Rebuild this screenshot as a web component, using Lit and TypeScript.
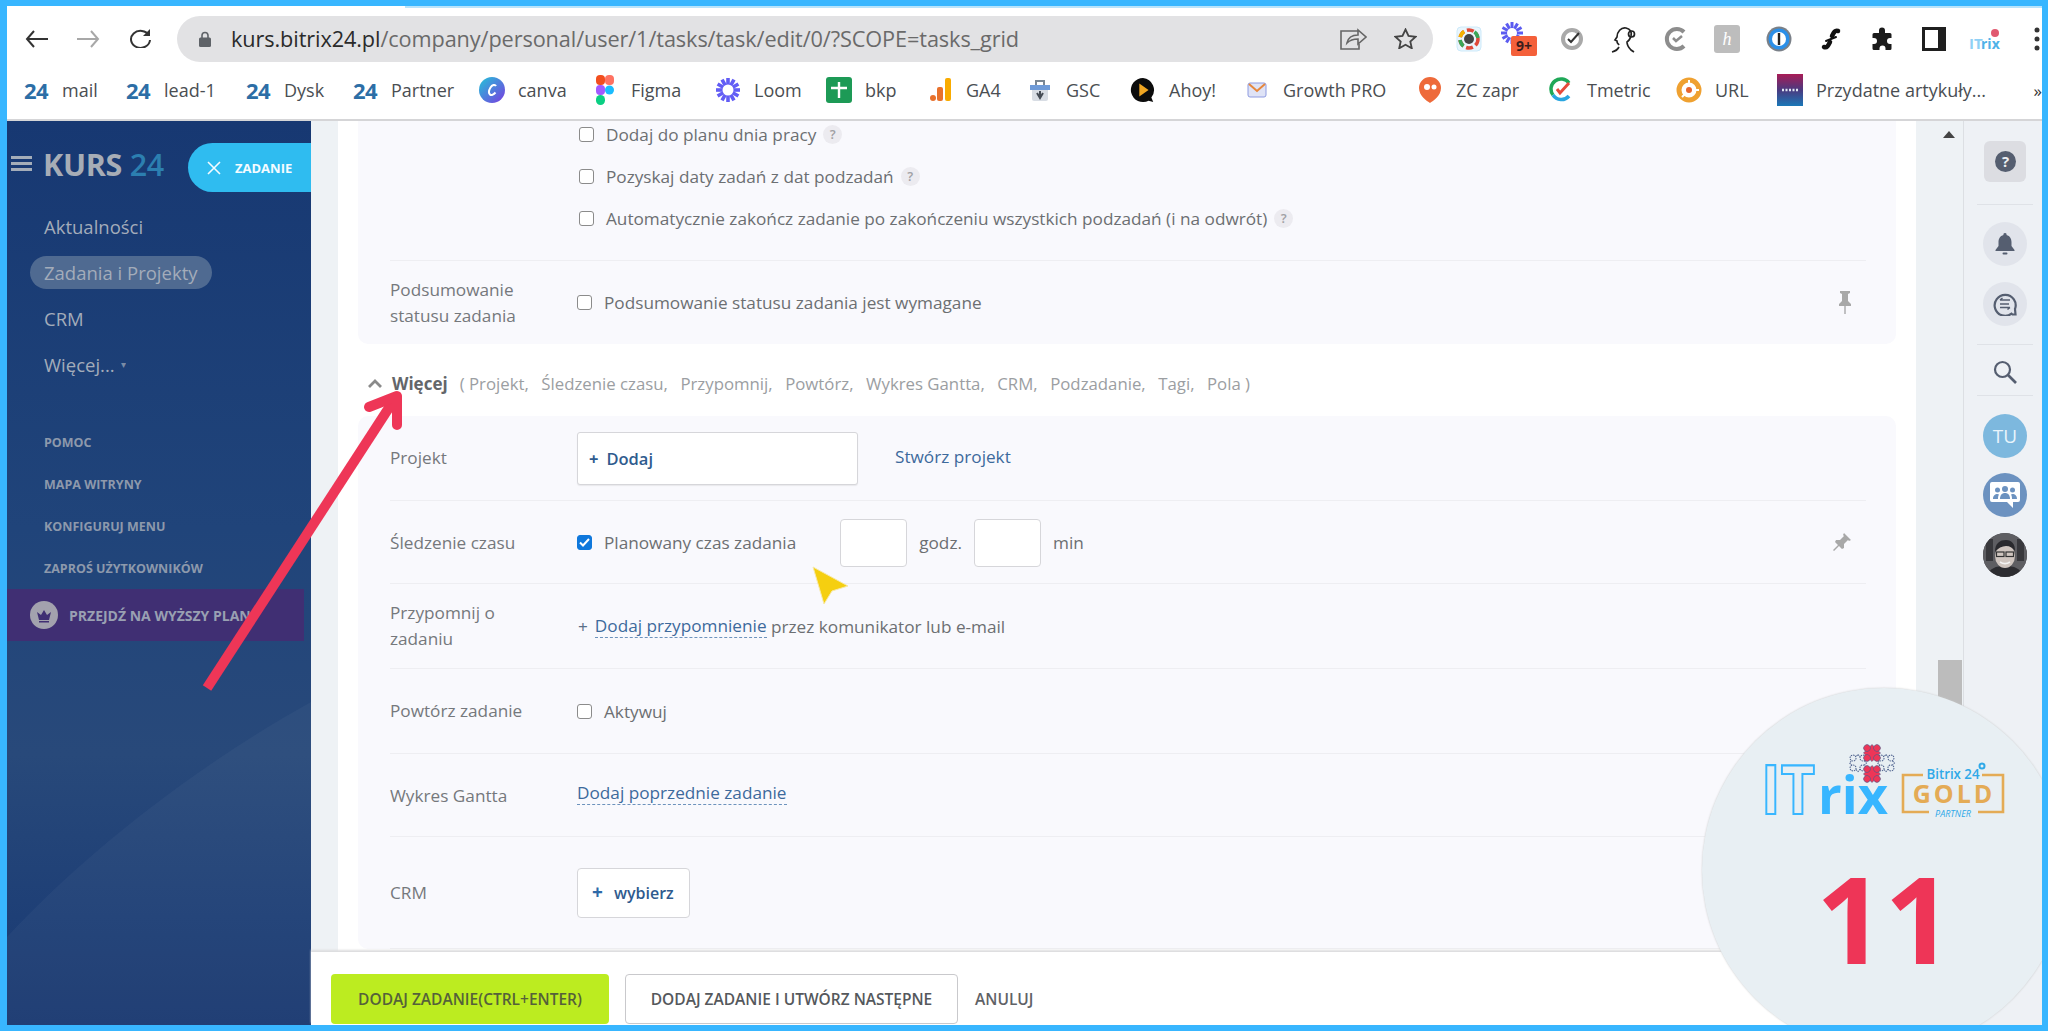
import { LitElement, html, css, svg } from 'lit';
import { customElement } from 'lit/decorators.js';

const bookmarks = [
  { icon: '24', label: 'mail', w: 102 },
  { icon: '24', label: 'lead-1', w: 120 },
  { icon: '24', label: 'Dysk', w: 107 },
  { icon: '24', label: 'Partner', w: 127 },
  { icon: 'canva', label: 'canva', w: 113 },
  { icon: 'figma', label: 'Figma', w: 123 },
  { icon: 'loom', label: 'Loom', w: 111 },
  { icon: 'bkp', label: 'bkp', w: 101 },
  { icon: 'ga4', label: 'GA4', w: 100 },
  { icon: 'gsc', label: 'GSC', w: 103 },
  { icon: 'ahoy', label: 'Ahoy!', w: 114 },
  { icon: 'growth', label: 'Growth PRO', w: 173 },
  { icon: 'zc', label: 'ZC zapr', w: 131 },
  { icon: 'tmetric', label: 'Tmetric', w: 128 },
  { icon: 'url', label: 'URL', w: 101 },
  { icon: 'przyd', label: 'Przydatne artykuły...', w: 240 },
];

const moreItems = ['Projekt,', 'Śledzenie czasu,', 'Przypomnij,', 'Powtórz,', 'Wykres Gantta,', 'CRM,', 'Podzadanie,', 'Tagi,', 'Pola )'];

function bookmarkIcon(name: string) {
  switch (name) {
    case '24':
      return html`<span class="b24">24</span>`;
    case 'canva':
      return html`<svg width="26" height="26" viewBox="0 0 26 26"><defs><linearGradient id="cv" x1="0" y1="0" x2="1" y2="1"><stop offset="0" stop-color="#22c4d8"/><stop offset="1" stop-color="#7a3be0"/></linearGradient></defs><circle cx="13" cy="13" r="13" fill="url(#cv)"/><path d="M17 9c-1-2-4-1-5.500 1.500S9.500 16 11 17.500s4-.5 5.500-2" fill="none" stroke="#fff" stroke-width="2"/></svg>`;
    case 'figma':
      return html`<svg width="18" height="30" viewBox="0 0 18 30"><rect x="0" y="0" width="9" height="10" rx="4" fill="#f24e1e"/><rect x="9" y="0" width="9" height="10" fill="#ff7262" rx="4"/><rect x="0" y="10" width="9" height="10" rx="4" fill="#a259ff"/><circle cx="13.500" cy="15" r="4.500" fill="#1abcfe"/><rect x="0" y="20" width="9" height="10" rx="4.500" fill="#0acf83"/></svg>`;
    case 'loom':
      return html`<svg width="26" height="26" viewBox="0 0 26 26"><g stroke="#625df5" stroke-width="3.600">${[0, 30, 60, 90, 120, 150].map(a => svg`<line x1="13" y1="1" x2="13" y2="25" transform="rotate(${a} 13 13)"/>`)}</g><circle cx="13" cy="13" r="5.500" fill="#fff"/></svg>`;
    case 'bkp':
      return html`<svg width="26" height="26" viewBox="0 0 26 26"><rect width="26" height="26" rx="3" fill="#1d9a56"/><path d="M13 5v16M5 11h16" stroke="#fff" stroke-width="2.400"/></svg>`;
    case 'ga4':
      return html`<svg width="24" height="26" viewBox="0 0 24 26"><circle cx="5" cy="21" r="3" fill="#e8712c"/><rect x="9" y="10" width="6" height="14" rx="2" fill="#e8712c"/><rect x="17" y="1" width="6" height="23" rx="2" fill="#f9ab00"/></svg>`;
    case 'gsc':
      return html`<svg width="24" height="26" viewBox="0 0 24 26"><rect x="4" y="8" width="16" height="16" rx="2" fill="#d8dde4"/><rect x="2" y="8" width="20" height="5" fill="#6f9bd8"/><path d="M8 8V4h8v4" fill="none" stroke="#7a8794" stroke-width="2"/><path d="M12 14v7M9 16l3 5 3-5" fill="none" stroke="#454c55" stroke-width="2"/></svg>`;
    case 'ahoy':
      return html`<svg width="28" height="28" viewBox="0 0 28 28"><path d="M14 1a13 13 0 1 0 6 24.500L25 27l-2-5A13 13 0 0 0 14 1z" fill="#0c0c0c"/><path d="M10 7l10 7-10 7z" fill="#f0a622"/></svg>`;
    case 'growth':
      return html`<svg width="24" height="22" viewBox="0 0 24 22"><rect x="3" y="4" width="18" height="14" rx="2" fill="#dfe3f6" stroke="#8e9be0"/><path d="M4 5l8 7 8-7" fill="none" stroke="#e6873e" stroke-width="2"/></svg>`;
    case 'zc':
      return html`<svg width="24" height="28" viewBox="0 0 24 28"><path d="M12 1a11 11 0 0 1 11 11c0 8-8 13-11 15-3-2-11-7-11-15A11 11 0 0 1 12 1z" fill="#ee6a3a"/><circle cx="9" cy="11" r="3" fill="#fff"/><circle cx="16" cy="11" r="2.500" fill="#fff"/></svg>`;
    case 'tmetric':
      return html`<svg width="24" height="26" viewBox="0 0 24 26"><path d="M20 6A10 10 0 0 0 4 18" fill="none" stroke="#1fa858" stroke-width="3.500"/><path d="M4 18a10 10 0 0 0 16 1" fill="none" stroke="#2aa6e0" stroke-width="3.500"/><path d="M8 12l3 4 9-10" fill="none" stroke="#e64a3a" stroke-width="3"/></svg>`;
    case 'url':
      return html`<svg width="26" height="26" viewBox="0 0 26 26"><circle cx="13" cy="13" r="10" fill="none" stroke="#efa131" stroke-width="5"/><circle cx="13" cy="13" r="3" fill="#e8662e"/><path d="M13 3v5M23 13h-5M6 20l3-3" stroke="#fff" stroke-width="2"/></svg>`;
    case 'przyd':
      return html`<svg width="26" height="32" viewBox="0 0 26 32"><defs><linearGradient id="pz" x1="0" y1="0" x2="0" y2="1"><stop offset="0" stop-color="#a81c56"/><stop offset=".5" stop-color="#4a3a80"/><stop offset="1" stop-color="#1a78b8"/></linearGradient></defs><rect width="26" height="32" fill="url(#pz)"/><path d="M5 16h16" stroke="#dfe6f2" stroke-width="2.500" stroke-dasharray="2 1.500"/></svg>`;
  }
  return '';
}

@customElement('app-root')
export class AppRoot extends LitElement {
  static styles = css`
    :host {
      display: block;
      font-family: "Open Sans", "Liberation Sans", sans-serif;
    }
    * { box-sizing: border-box; }
    .frame {
      position: relative;
      width: 2048px;
      height: 1031px;
      border: solid #38b6ff;
      border-width: 6px 6px 6px 7px;
      overflow: hidden;
      display: flex;
      flex-direction: column;
      background: #fff;
    }

    /* browser chrome */
    .chrome { height: 115px; flex: none; border-bottom: 2px solid #d5d5d7; background: #fff; }
    .toolbar { height: 57px; display: flex; align-items: center; padding-top: 8px; position: relative; }
    .tabline { position: absolute; left: 398px; right: 0; top: 0; height: 2px; background: #b8e3fb; }
    .nav { width: 52px; display: flex; justify-content: center; flex: none; }
    .nav.first { margin-left: 3px; }
    .pill {
      margin-left: 11px;
      width: 1256px;
      height: 46px;
      border-radius: 23px;
      background: #e2e2e4;
      display: flex;
      align-items: center;
      padding-left: 22px;
      flex: none;
    }
    .url { margin-left: 20px; font-size: 21.700px; color: #6a6a6a; white-space: nowrap; letter-spacing: -.1px; }
    .url b { font-weight: 400; color: #2a2a2a; }
    .pill-end { margin-left: auto; display: flex; align-items: center; gap: 27px; padding-right: 16px; }
    .exts { display: flex; margin-left: 10px; }
    .ext { width: 51.700px; display: flex; justify-content: center; align-items: center; position: relative; height: 34px; flex: none; }
    .bookmarks { height: 56px; display: flex; align-items: center; padding-left: 16px; padding-bottom: 2px; }
    .bm { display: flex; align-items: center; flex: none; }
    .bm-icon { width: 26px; margin-right: 13px; display: flex; justify-content: center; align-items: center; flex: none; }
    .bm-label { font-size: 18px; color: #4a4e52; white-space: nowrap; }
    .b24 { font-size: 22px; font-weight: 700; color: #2c6ea6; letter-spacing: -.5px; }
    .more-bm { margin-left: auto; margin-right: 0; font-size: 17px; color: #333; }

    /* bitrix layout */
    .app { flex: 1; display: flex; min-height: 0; }
    .sidebar {
      width: 304px;
      flex: none;
      position: relative;
      overflow: hidden;
      background: linear-gradient(180deg, #173872 0%, #20447a 45%, #28497a 70%, #1e3f76 88%, #193970 100%);
    }
    .side-arc { position: absolute; left: 0; top: 0; }
    .side-head { position: relative; display: flex; margin-top: 22px; height: 49px; align-items: flex-start; padding-left: 4px; }
    .burger { width: 21px; height: 15px; margin-top: 13px; border-top: 3px solid #a4adb9; border-bottom: 3px solid #a4adb9; position: relative; flex: none; }
    .burger::after { content: ""; position: absolute; left: 0; right: 0; top: 3px; height: 3px; background: #a4adb9; }
    .kurs { margin-left: 11px; font-size: 30.500px; line-height: 42px; font-weight: 700; color: #a7adb6; white-space: nowrap; letter-spacing: -.3px; }
    .kurs span { color: #2c7fb0; font-weight: 600; }
    .add {
      margin-left: auto;
      width: 123px;
      height: 49px;
      border-radius: 25px 0 0 25px;
      background: #2fbcf0;
      display: flex;
      align-items: center;
      padding-left: 19px;
      gap: 14px;
      color: #f4fbff;
      font-size: 13px;
      font-weight: 700;
    }
    .menu { position: relative; margin-top: 11px; padding-left: 23px; }
    .menu-item { height: 46px; display: flex; align-items: center; padding-left: 14px; font-size: 18.500px; color: #a3acba; }
    .menu-item .on { margin-left: -14px; padding: 0 14px; height: 33px; width: 182px; border-radius: 17px; background: #4f6a91; display: flex; align-items: center; white-space: nowrap; }
    .caret { margin-left: 6px; font-size: 10px; opacity: .7; }
    .small { position: relative; margin-top: 34px; padding-left: 37px; }
    .small div { height: 42px; display: flex; align-items: center; font-size: 12.500px; font-weight: 700; color: #8d99ac; text-transform: uppercase; white-space: nowrap; }
    .upgrade { position: relative; height: 52px; width: 297px; background: #402f73; display: flex; align-items: center; padding-left: 23px; gap: 11px; font-size: 14px; font-weight: 700; color: #99a0b2; white-space: nowrap; }
    .crown { width: 28px; height: 28px; flex: none; }

    .main { flex: 1; display: flex; min-width: 0; }
    .center { flex: 1; display: flex; flex-direction: column; min-width: 0; }
    .scroller { flex: 1; display: flex; min-height: 0; overflow: hidden; background: #eef2f5; padding-left: 27px; }
    .sheet { width: 1578px; flex: none; background: #fff; padding: 0 20px; overflow: hidden; }
    .gutter { flex: 1; padding: 10px 0 0 22px; }
    .up { width: 0; height: 0; margin-left: 5px; border: 6px solid transparent; border-top: 0; border-bottom: 7px solid #444; }
    .thumb { width: 24px; height: 60px; margin-top: 522px; background: #bcbcbc; }
    .panel { background: #f9f9fd; border-radius: 10px; padding: 0 30px 0 32px; }
    .panel.top { border-radius: 0 0 10px 10px; }
    .opts { margin-top: -8px; padding: 0 0 21px 187px; border-bottom: 1px solid #eeeef2; }
    .opt { height: 42px; display: flex; align-items: center; padding-left: 2px; font-size: 17.200px; color: #6c6f72; white-space: nowrap; }
    .box { width: 15px; height: 15px; border: 1.500px solid #8b8b8b; border-radius: 3px; background: #fff; flex: none; margin-right: 12px; }
    .box.check { background: #0f78dc; border-color: #0f78dc; display: flex; align-items: center; justify-content: center; }
    .hint { width: 19px; height: 19px; border-radius: 50%; background: #ecebf0; color: #a0a0a4; font-size: 13px; font-weight: 600; display: flex; align-items: center; justify-content: center; margin-left: 7px; }
    .row { display: flex; align-items: center; border-bottom: 1px solid #eeeef2; font-size: 17.200px; color: #6c6f72; }
    .row.last { border-bottom: 0; }
    .h83 { height: 83px; }
    .h85 { height: 85px; }
    .h112 { height: 112px; }
    .label { width: 187px; flex: none; line-height: 26px; color: #75787c; }
    .label.low { padding-top: 2px; }
    .val { flex: 1; display: flex; align-items: center; white-space: nowrap; }
    .pin { margin-left: auto; margin-right: 14px; display: flex; }
    .link { color: #3d6a9c; }
    .dash { color: #3d6a9c; border-bottom: 1px dashed #6d93bd; line-height: 22px; }
    .dash.raised { margin-top: -4px; }
    .picker { width: 281px; height: 53px; background: #fff; border: 1px solid #d6d6da; border-radius: 3px; display: flex; align-items: center; padding-left: 11px; color: #2f5b8e; font-size: 16.500px; font-weight: 600; box-shadow: 0 1px 1px #e8e8ec; }
    .picker i { font-style: normal; margin-right: 8px; font-weight: 700; }
    .side-link { margin-left: 37px; margin-top: -3px; }
    .num { width: 67px; height: 48px; background: #fff; border: 1px solid #d6d6da; border-radius: 4px; margin-top: 2px; }
    .num.one { margin-left: 44px; margin-right: 12px; }
    .num.two { margin-left: 12px; margin-right: 12px; }
    .plus { color: #5a6f88; margin: 0 7px 0 1px; }
    .choose { width: 113px; height: 50px; background: #fff; border: 1px solid #d6d6da; border-radius: 4px; display: flex; align-items: center; padding-left: 14px; color: #2f5b8e; font-size: 16px; font-weight: 600; }
    .choose i { font-style: normal; font-weight: 700; font-size: 19px; line-height: 1; margin-right: 11px; color: #2f6aa8; }
    .morebar { height: 72px; display: flex; align-items: center; padding: 6px 0 0 10px; white-space: nowrap; }
    .chev { width: 14px; flex: none; display: flex; margin-right: 10px; }
    .morebar b { font-size: 17px; font-weight: 700; color: #63666a; }
    .morelist { display: flex; margin-left: 12px; gap: 12.500px; font-size: 16.800px; color: #9b9ea2; }

    .footer { height: 73px; flex: none; background: #fff; display: flex; align-items: flex-start; padding: 22px 0 0 20px; position: relative; box-shadow: 0 -2px 2px #dcdcde; }
    .btn { height: 50px; border-radius: 4px; display: flex; align-items: center; justify-content: center; font-size: 15.500px; font-weight: 600; text-transform: uppercase; white-space: nowrap; }
    .btn.go { width: 278px; background: #bcec20; color: #55613a; }
    .btn.next { width: 333px; margin-left: 16px; background: #fff; border: 1px solid #c9c9cc; color: #55585c; }
    .cancel { margin-left: 17px; height: 50px; display: flex; align-items: center; font-size: 15.500px; font-weight: 600; color: #5f6266; }
    .foot-box { margin: 17px 0 0 auto; }

    .rail { width: 79px; flex: none; background: #eef1f5; border-left: 1px solid #dcdfe3; padding: 20px 0 0 4px; display: flex; flex-direction: column; align-items: center; }
    .help { width: 42px; height: 41px; border-radius: 6px; background: #dcdde2; display: flex; align-items: center; justify-content: center; margin-bottom: 22px; flex: none; }
    .sep { width: 56px; height: 1px; background: #dfe2e7; flex: none; }
    .round { width: 44px; height: 44px; border-radius: 50%; background: #e1e4eb; display: flex; align-items: center; justify-content: center; flex: none; overflow: hidden; }
    .bell { margin-top: 17px; }
    .chat { margin-top: 16px; margin-bottom: 18px; }
    .find { display: flex; margin: 15px 0 11px; height: 24px; flex: none; }
    .tu { margin-top: 18px; background: #7db8de; color: #e8f4fb; font-size: 19px; }
    .grp { margin-top: 15px; background: #6c92c0; }
    .me { margin-top: 16px; background: #3c3c40; }

    /* things laid over the recording */
    .marks { position: absolute; left: -7px; top: -6px; pointer-events: none; }
    .badge { position: absolute; left: 1695px; top: 682px; width: 364px; height: 364px; border-radius: 50%; background: #e8eff3; box-shadow: 0 0 2px #c9c9c9; }
    .logo { position: absolute; left: 60px; top: 30px; }
    .count { position: absolute; left: 114px; top: 170px; font-size: 120px; line-height: 120px; font-weight: 700; color: #ee3557; }
  `;

  private renderExts() {
    return html`<div class="exts">
      <div class="ext"><svg width="26" height="26" viewBox="0 0 26 26"><rect x="1" y="1" width="24" height="24" rx="4" fill="#eaf6fd" stroke="#cdeafa"/><circle cx="13" cy="13" r="9" fill="none" stroke="#e04a3a" stroke-width="3.500" stroke-dasharray="7 3"/><circle cx="13" cy="13" r="9" fill="none" stroke="#3aa757" stroke-width="3.500" stroke-dasharray="7 21" stroke-dashoffset="-20"/><circle cx="13" cy="13" r="9" fill="none" stroke="#f4b400" stroke-width="3.500" stroke-dasharray="7 30" stroke-dashoffset="-30"/><circle cx="13" cy="13" r="5" fill="#444"/></svg></div>
      <div class="ext"><svg width="44" height="40" viewBox="0 0 44 40"><g stroke="#5c5cf0" stroke-width="3">${[0, 30, 60, 90, 120, 150].map(a => svg`<line x1="13" y1="3" x2="13" y2="25" transform="rotate(${a} 13 14)"/>`)}</g><circle cx="13" cy="14" r="5" fill="#fff"/><rect x="12" y="17" width="26" height="20" rx="2" fill="#f4603a"/><text x="25" y="32" text-anchor="middle" font-size="14" font-weight="700" fill="#3a1d1d" font-family="Open Sans">9+</text></svg></div>
      <div class="ext"><svg width="24" height="24" viewBox="0 0 24 24"><circle cx="12" cy="12" r="9" fill="none" stroke="#a9a9a9" stroke-width="4"/><path d="M8 12l3 3 8-9" fill="none" stroke="#333" stroke-width="2"/></svg></div>
      <div class="ext"><svg width="26" height="28" viewBox="0 0 26 28" fill="none" stroke="#222" stroke-width="1.700"><path d="M1 27c4-1 6-3 7-5"/><path d="M8 20c-1-2-2-1-2-4l-2-1 2-3c0-5 4-10 9-9 4 1 6 4 5 8-1 3-2 5-4 6 0 3 2 6 4 8l3 2"/><circle cx="20.500" cy="9" r="3"/></svg></div>
      <div class="ext"><svg width="26" height="26" viewBox="0 0 26 26" fill="none" stroke="#8d8d8d" stroke-width="4"><path d="M21 6A10 10 0 1 0 21 20"/><path d="M10 12l3 3 6-5" stroke-width="2.500"/></svg></div>
      <div class="ext"><svg width="26" height="28" viewBox="0 0 26 28"><rect width="26" height="28" rx="3" fill="#bdbdbd"/><text x="13" y="20" text-anchor="middle" font-size="18" font-style="italic" font-family="Liberation Serif" fill="#fff">h</text></svg></div>
      <div class="ext"><svg width="26" height="26" viewBox="0 0 26 26"><circle cx="13" cy="13" r="12.500" fill="#7a8088"/><circle cx="13" cy="13" r="10.500" fill="#2b8fe8"/><circle cx="13" cy="13" r="7" fill="#fff"/><rect x="11.800" y="7" width="2.400" height="12" fill="#222"/></svg></div>
      <div class="ext"><svg width="22" height="24" viewBox="0 0 22 24" fill="none" stroke="#111" stroke-width="4.500" stroke-linecap="round"><path d="M4 20c3 1 4-1 6-5"/><path d="M18 4c-3-1-4 1-6 5"/><path d="M6 14l10-4" stroke="#111" stroke-width="2"/></svg></div>
      <div class="ext"><svg width="24" height="24" viewBox="0 0 24 24"><path fill="#1b1b1b" d="M9 3.500a3 3 0 0 1 6 0V6h5a1.500 1.500 0 0 1 1.500 1.500V11h-1.500a3 3 0 0 0 0 6h1.500v4.500A1.500 1.500 0 0 1 20 23h-4.500v-1.500a3 3 0 0 0-6 0V23H4a1.500 1.500 0 0 1-1.500-1.500V17H4a3 3 0 0 0 0-6H2.500V7.500A1.500 1.500 0 0 1 4 6h5z"/></svg></div>
      <div class="ext"><svg width="24" height="24" viewBox="0 0 24 24"><rect x="1.500" y="1.500" width="21" height="21" fill="#fff" stroke="#1f1f1f" stroke-width="3"/><rect x="16" y="2" width="6" height="20" fill="#1f1f1f"/></svg></div>
      <div class="ext"><svg width="34" height="26" viewBox="0 0 34 26"><text x="0" y="23" font-size="15" font-weight="700" fill="#8fd0f5" font-family="Open Sans">IT</text><text x="12" y="23" font-size="14" font-weight="700" fill="#4fb2e8" font-family="Open Sans">rix</text><circle cx="26" cy="7" r="4" fill="#e05a70"/></svg></div>
      <div class="ext"><svg width="8" height="26" viewBox="0 0 8 26" fill="#333"><circle cx="4" cy="4" r="2.500"/><circle cx="4" cy="13" r="2.500"/><circle cx="4" cy="22" r="2.500"/></svg></div>
    </div>`;
  }

  private renderChrome() {
    return html`<div class="chrome">
      <div class="toolbar">
        <div class="tabline"></div>
        <div class="nav first"><svg width="23" height="18" viewBox="0 0 23 18" fill="none" stroke="#333" stroke-width="2"><path d="M23 9H2M9 1L2 9l7 8"/></svg></div>
        <div class="nav"><svg width="23" height="18" viewBox="0 0 23 18" fill="none" stroke="#a8a8a8" stroke-width="2"><path d="M0 9h21M14 1l7 8-7 8"/></svg></div>
        <div class="nav"><svg width="23" height="19" viewBox="0 0 23 19" fill="none" stroke="#333" stroke-width="2"><path d="M20 6.500A9.500 8.500 0 1 0 21 11"/><path d="M21 0v7h-7" fill="#333" stroke="none"/></svg></div>
        <div class="pill">
          <svg width="12" height="16" viewBox="0 0 12 16"><path d="M3 7V4.500a3 3 0 0 1 6 0V7" fill="none" stroke="#5f6368" stroke-width="1.600"/><rect y="6.500" width="12" height="9.500" rx="1.500" fill="#5f6368"/></svg>
          <span class="url"><b>kurs.bitrix24.pl</b>/company/personal/user/1/tasks/task/edit/0/?SCOPE=tasks_grid</span>
          <div class="pill-end">
            <svg width="27" height="22" viewBox="0 0 27 22" fill="none" stroke="#666" stroke-width="1.600"><path d="M18 3H1v18h18v-5"/><path d="M7 15c1-5 5-8 11-8V2l8 7-8 7v-5c-4 0-8 1-11 4z"/></svg>
            <svg width="23" height="21" viewBox="0 0 23 21" fill="none" stroke="#444" stroke-width="1.800"><path d="M11.500 1.500l3 6.500 7 .8-5.200 4.700 1.500 6.800-6.300-3.500-6.300 3.500 1.500-6.800L1.500 8.800l7-.8z"/></svg>
          </div>
        </div>
        ${this.renderExts()}
      </div>
      <div class="bookmarks">
        ${bookmarks.map(b => html`<div class="bm" style="width:${b.w}px"><div class="bm-icon">${bookmarkIcon(b.icon)}</div><span class="bm-label">${b.label}</span></div>`)}
        <span class="more-bm">»</span>
      </div>
    </div>`;
  }

  private renderSidebar() {
    return html`<aside class="sidebar">
      <svg class="side-arc" width="304" height="904" viewBox="0 0 304 904"><path d="M0 816C70 740 180 650 304 581V904H0z" fill="#fff" fill-opacity=".035"/></svg>
      <div class="side-head">
        <div class="burger"></div>
        <div class="kurs">KURS <span>24</span></div>
        <div class="add"><svg width="14" height="14" viewBox="0 0 14 14" stroke="#f4fbff" stroke-width="1.600"><path d="M1 1l12 12M13 1L1 13"/></svg>ZADANIE</div>
      </div>
      <div class="menu">
        <div class="menu-item">Aktualności</div>
        <div class="menu-item"><span class="on">Zadania i Projekty</span></div>
        <div class="menu-item">CRM</div>
        <div class="menu-item">Więcej...<span class="caret">▾</span></div>
      </div>
      <div class="small">
        <div>Pomoc</div>
        <div>Mapa witryny</div>
        <div>Konfiguruj menu</div>
        <div>Zaproś użytkowników</div>
      </div>
      <div class="upgrade">
        <svg class="crown" viewBox="0 0 28 28"><circle cx="14" cy="14" r="14" fill="#a3a2ae"/><path d="M7 11l4 3 3-5 3 5 4-3-2 8H9z" fill="#402f73"/><rect x="9" y="20" width="10" height="1.500" fill="#402f73"/></svg>
        PRZEJDŹ NA WYŻSZY PLAN
      </div>
    </aside>`;
  }

  private renderSheet() {
    return html`<div class="sheet">
      <div class="panel top">
        <div class="opts">
          <div class="opt"><span class="box"></span>Dodaj do planu dnia pracy<span class="hint">?</span></div>
          <div class="opt"><span class="box"></span>Pozyskaj daty zadań z dat podzadań<span class="hint">?</span></div>
          <div class="opt"><span class="box"></span>Automatycznie zakończ zadanie po zakończeniu wszystkich podzadań (i na odwrót)<span class="hint">?</span></div>
        </div>
        <div class="row h83 last">
          <div class="label">Podsumowanie<br>statusu zadania</div>
          <div class="val"><span class="box"></span>Podsumowanie statusu zadania jest wymagane
            <span class="pin"><svg width="14" height="24" viewBox="0 0 14 24" fill="#a8a8a8"><path d="M2 0h10v2l-2 1v7l3 3v2H1v-2l3-3V3L2 2z"/><rect x="6" y="15" width="2" height="8" opacity=".7"/></svg></span>
          </div>
        </div>
      </div>
      <div class="morebar">
        <span class="chev"><svg width="14" height="9" viewBox="0 0 14 9" fill="none" stroke="#8a8a8a" stroke-width="2.800"><path d="M1 8l6-6 6 6"/></svg></span>
        <b>Więcej</b>
        <div class="morelist">${moreItems.map((m, i) => html`<span>${i === 0 ? '( ' : ''}${m}</span>`)}</div>
      </div>
      <div class="panel">
        <div class="row h85">
          <div class="label">Projekt</div>
          <div class="val"><div class="picker"><i>+</i>Dodaj</div><span class="link side-link">Stwórz projekt</span></div>
        </div>
        <div class="row h83">
          <div class="label low">Śledzenie czasu</div>
          <div class="val"><span class="box check"><svg width="11" height="9" viewBox="0 0 11 9" fill="none" stroke="#fff" stroke-width="2"><path d="M1 4.500l3 3 6-6.500"/></svg></span>Planowany czas zadania
            <span class="num one"></span>godz.<span class="num two"></span>min
            <span class="pin"><svg width="20" height="20" viewBox="0 0 20 20" fill="#a8a8a8"><path d="M12 1l7 7-2 1-1-1-4 4 0 4-2 1-3-3-5 5-1-1 5-5-3-3 1-2 4 0 4-4-1-1z"/></svg></span>
          </div>
        </div>
        <div class="row h85">
          <div class="label">Przypomnij o<br>zadaniu</div>
          <div class="val"><span class="plus">+</span><span class="dash">Dodaj przypomnienie</span>&nbsp;przez komunikator lub e-mail</div>
        </div>
        <div class="row h85">
          <div class="label">Powtórz zadanie</div>
          <div class="val"><span class="box"></span>Aktywuj</div>
        </div>
        <div class="row h83">
          <div class="label low">Wykres Gantta</div>
          <div class="val"><span class="dash raised">Dodaj poprzednie zadanie</span></div>
        </div>
        <div class="row h112">
          <div class="label">CRM</div>
          <div class="val"><div class="choose"><i>+</i>wybierz</div></div>
        </div>
      </div>
    </div>
    <div class="gutter"><div class="up"></div><div class="thumb"></div></div>`;
  }

  private renderRail() {
    return html`<div class="rail">
      <div class="help"><svg width="21" height="21" viewBox="0 0 21 21"><circle cx="10.500" cy="10.500" r="10.500" fill="#555e70"/><text x="10.500" y="16" text-anchor="middle" font-size="15" font-weight="700" fill="#eceef2" font-family="Open Sans">?</text></svg></div>
      <div class="sep"></div>
      <div class="round bell"><svg width="20" height="22" viewBox="0 0 20 22" fill="#555e70"><path d="M10 0a1.500 1.500 0 0 1 1.500 2C15 3 16.500 6 16.500 9v4l3 4v1H.5v-1l3-4V9c0-3 1.500-6 5-7A1.500 1.500 0 0 1 10 0z"/><rect x="7.500" y="19.500" width="5" height="2" rx="1"/></svg></div>
      <div class="round chat"><svg width="24" height="24" viewBox="0 0 24 24" fill="none" stroke="#555e70" stroke-width="2.200"><path d="M22.500 22.500h-3l-1-.8A10.500 10.500 0 1 1 22 17z"/><path d="M7 8h10M7 8l2.500-2M17 15.500H7M17 15.500l-2.500 2M7 12h9" stroke-width="1.500"/></svg></div>
      <div class="sep"></div>
      <div class="find"><svg width="24" height="24" viewBox="0 0 24 24" fill="none" stroke="#555e70" stroke-width="2.200"><circle cx="9.500" cy="9.500" r="7.500"/><path d="M15 15l8 8" stroke-width="2.600"/></svg></div>
      <div class="sep"></div>
      <div class="round tu">TU</div>
      <div class="round grp"><svg width="32" height="28" viewBox="0 0 32 28"><path d="M3 1h26a2 2 0 0 1 2 2v16a2 2 0 0 1-2 2h-5v6l-6-6H3a2 2 0 0 1-2-2V3a2 2 0 0 1 2-2z" fill="#fff"/><g fill="#6c92c0"><circle cx="16" cy="8" r="3"/><path d="M11 18c0-4 2-6 5-6s5 2 5 6z"/><circle cx="8.500" cy="9" r="2.500"/><path d="M4 18c0-3.500 2-5 4.500-5l1.500.5c-.8 1-1 3-1 4.500z"/><circle cx="23.500" cy="9" r="2.500"/><path d="M28 18c0-3.500-2-5-4.500-5l-1.500.5c.8 1 1 3 1 4.500z"/></g></svg></div>
      <div class="round me"><svg width="44" height="44" viewBox="0 0 44 44"><rect width="44" height="44" fill="#5e5e62"/><rect x="3" y="6" width="7" height="22" fill="#38383c"/><rect x="34" y="6" width="7" height="22" fill="#38383c"/><path d="M4 44c2-9 9-11 18-11s16 2 18 11z" fill="#2c2c30"/><ellipse cx="22" cy="23" rx="10" ry="12" fill="#cfc5bf"/><path d="M12 19c0-9 5-12 11-12s9 4 9 11c-2-3-5-5-9-5s-8 2-11 6z" fill="#2a2a2e"/><rect x="13.500" y="19" width="7.500" height="4.500" fill="none" stroke="#333" stroke-width="1.200"/><rect x="23" y="19" width="7.500" height="4.500" fill="none" stroke="#333" stroke-width="1.200"/><path d="M17 29c3 2 7 2 10 0" stroke="#f2f2f2" stroke-width="1.600" fill="none"/></svg></div>
    </div>`;
  }

  private renderBadge() {
    const piece = (cx: number, cy: number, r: number, bump: number) => svg`<g transform="rotate(45 ${cx} ${cy})"><rect x="${cx - r}" y="${cy - r}" width="${r * 2}" height="${r * 2}"/><circle cx="${cx}" cy="${cy - r - 1}" r="${bump}"/><circle cx="${cx + r + 1}" cy="${cy}" r="${bump}"/><circle cx="${cx}" cy="${cy + r + 1}" r="${bump}"/><circle cx="${cx - r - 1}" cy="${cy}" r="${bump}"/></g>`;
    return html`<div class="badge">
      <svg class="logo" width="250" height="120" viewBox="0 0 250 120">
        <text x="-1" y="96" font-family="Open Sans" font-size="68" font-weight="700" fill="#e8eff3" stroke="#38b6ff" stroke-width="2.200" textLength="54" lengthAdjust="spacingAndGlyphs">IT</text>
        <text x="56" y="96" font-family="Open Sans" font-size="52" font-weight="700" fill="#38b6ff" textLength="70" lengthAdjust="spacingAndGlyphs">rix</text>
        <g fill="#e8eff3" stroke="#4b5f8c" stroke-width="1" stroke-dasharray="1.500 .8">
          ${piece(96, 45, 6, 3)}
          ${piece(124, 45, 6, 3)}
        </g>
        <g fill="#ee3557" stroke="#4b5f8c" stroke-width=".6">
          ${piece(110, 35, 6, 3.400)}
          ${piece(110, 56, 6, 3.400)}
        </g>
        <path d="M161 57H141V94H167M216 94H241V57H220" fill="none" stroke="#e4ab55" stroke-width="2.600"/>
        <text x="191" y="61" text-anchor="middle" font-family="Open Sans" font-size="14.500" font-weight="600" fill="#2fa9e8" textLength="53" lengthAdjust="spacingAndGlyphs">Bitrix 24</text>
        <circle cx="220" cy="48" r="2.500" fill="none" stroke="#2fa9e8" stroke-width="2"/>
        <text x="192" y="85" text-anchor="middle" font-family="Open Sans" font-size="25" font-weight="700" fill="#e4ab55" letter-spacing="3">GOLD</text>
        <text x="191" y="99" text-anchor="middle" font-family="Open Sans" font-size="9" font-style="italic" fill="#2fa9e8">PARTNER</text>
      </svg>
      <div class="count">11</div>
    </div>`;
  }

  render() {
    return html`<div class="frame">
      ${this.renderChrome()}
      <div class="app">
        ${this.renderSidebar()}
        <div class="main">
          <div class="center">
            <div class="scroller">${this.renderSheet()}</div>
            <div class="footer">
              <div class="btn go">Dodaj zadanie(Ctrl+Enter)</div>
              <div class="btn next">Dodaj zadanie i utwórz następne</div>
              <div class="cancel">ANULUJ</div>
              <span class="box foot-box"></span>
            </div>
          </div>
          ${this.renderRail()}
        </div>
      </div>
      <svg class="marks" width="2048" height="1031" viewBox="0 0 2048 1031">
        <path d="M207 688L394 400" stroke="#ee3657" stroke-width="10" fill="none"/>
        <path d="M369 407L397 396L397 425" stroke="#ee3657" stroke-width="10" fill="none" stroke-linecap="round" stroke-linejoin="round"/>
        <path d="M813 567L848 586L832 591L824 604z" fill="#f5cf10" stroke="#f7e9a8" stroke-width="1"/>
      </svg>
      ${this.renderBadge()}
    </div>`;
  }
}
